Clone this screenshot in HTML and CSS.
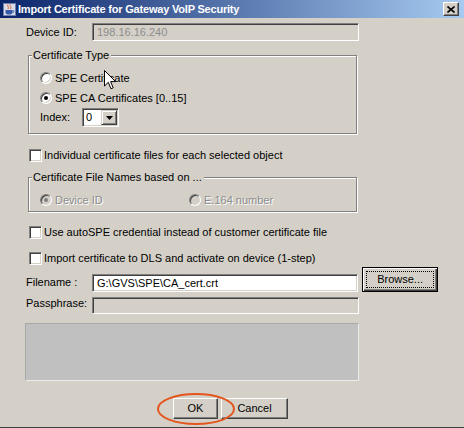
FILE: index.html
```html
<!DOCTYPE html>
<html lang="en">
<head>
  <meta charset="UTF-8">
  <title>Import Certificate for Gateway VoIP Security</title>
  <link rel="stylesheet" href="styles.css">
</head>
<body>
  <div class="dialog">
    <div class="titlebar">
      <svg class="app-icon" width="13" height="13" viewBox="0 0 13 13">
        <rect x="0.5" y="0.5" width="12" height="12" fill="#d8dce8" stroke="#7080a8"/>
        <path d="M5 1.5 C3.5 3 6.5 4 5 6 M7.5 1.5 C6 3 9 4 7.5 6" stroke="#e06020" stroke-width="1" fill="none"/>
        <path d="M2.5 7 H9.5 V9.5 C9.5 11 8 11.5 6 11.5 C4 11.5 2.5 11 2.5 9.5 Z" fill="#3858a8"/>
        <path d="M9.5 7.5 C11.5 7.5 11.5 9.5 9.5 9.5" stroke="#3858a8" fill="none"/>
      </svg>
      <span class="title">Import Certificate for Gateway VoIP Security</span>
      <span class="close-btn">
        <svg width="8" height="7" viewBox="0 0 8 7">
          <path d="M0.5 0.5 L7.5 6.5 M7.5 0.5 L0.5 6.5" stroke="#000" stroke-width="1.6"/>
        </svg>
      </span>
    </div>

    <div class="content">
      <div class="form-row device-row">
        <span class="label">Device ID:</span>
        <div class="textfield disabled">198.16.16.240</div>
      </div>

      <div class="group cert-type">
        <div class="group-title">Certificate Type</div>
        <div class="radio-row first-radio"><span class="radio"></span>SPE Certificate</div>
        <div class="radio-row"><span class="radio checked"></span>SPE CA Certificates [0..15]</div>
        <div class="index-row">
          <span class="index-label">Index:</span>
          <div class="combo">
            <span class="combo-value">0</span>
            <span class="combo-arrow">
              <svg width="7" height="4" viewBox="0 0 7 4"><path d="M0 0 H7 L3.5 4 Z" fill="#000"/></svg>
            </span>
          </div>
        </div>
      </div>

      <div class="check-row first-check"><span class="checkbox"></span>Individual certificate files for each selected object</div>

      <div class="group file-names">
        <div class="group-title">Certificate File Names based on ...</div>
        <div class="radio-line">
          <div class="radio-item device-id"><span class="radio disabled checked"></span><span class="disabled-text">Device ID</span></div>
          <div class="radio-item"><span class="radio disabled"></span><span class="disabled-text">E.164 number</span></div>
        </div>
      </div>

      <div class="check-row second-check"><span class="checkbox"></span>Use autoSPE credential instead of customer certificate file</div>
      <div class="check-row third-check"><span class="checkbox"></span>Import certificate to DLS and activate on device (1-step)</div>

      <div class="form-row file-row">
        <span class="label">Filename :</span>
        <div class="textfield">G:\GVS\SPE\CA_cert.crt</div>
        <button class="btn browse-btn"><span class="focus-ring">Browse...</span></button>
      </div>

      <div class="form-row pass-row">
        <span class="label">Passphrase:</span>
        <div class="textfield disabled"></div>
      </div>

      <div class="message-box"></div>

      <div class="button-row">
        <button class="btn ok-btn">OK</button>
        <button class="btn cancel-btn">Cancel</button>
        <svg class="ok-circle" width="80" height="34" viewBox="0 0 80 34">
          <ellipse cx="40" cy="17" rx="38" ry="15" fill="none" stroke="#e4561e" stroke-width="2"/>
        </svg>
      </div>
    </div>

    <svg class="cursor" width="13" height="20" viewBox="0 0 13 20">
      <path d="M0.5 0.5 L0.5 16 L4.3 12.3 L7 18.8 L9.2 17.8 L6.6 11.6 L11.5 11.6 Z" fill="#fff" stroke="#000" stroke-width="1"/>
    </svg>
  </div>
</body>
</html>
```

FILE: styles.css
```css
* {
  box-sizing: border-box;
}

body {
  margin: 0;
  background: #d4d0c8;
  font-family: "Liberation Sans", Arial, sans-serif;
  font-size: 11px;
  line-height: 13px;
  color: #000;
}

.dialog {
  position: relative;
  width: 464px;
  height: 428px;
  display: flex;
  flex-direction: column;
  background: #d4d0c8;
  border-bottom: 1px solid #404040;
  overflow: hidden;
}

/* title bar */
.titlebar {
  height: 18px;
  display: flex;
  align-items: center;
  padding: 0 5px 0 3px;
  background: linear-gradient(to right, #0a246a, #a6caf0);
  color: #fff;
  font-weight: bold;
}

.app-icon {
  margin-right: 2px;
  flex: none;
}

.title {
  flex: 1;
  letter-spacing: -0.2px;
}

.close-btn {
  width: 16px;
  height: 14px;
  display: flex;
  align-items: center;
  justify-content: center;
  background: #d4d0c8;
  border: 1px solid;
  border-color: #fff #404040 #404040 #fff;
  box-shadow: inset -1px -1px 0 #808080;
}

/* content */
.content {
  display: flex;
  flex-direction: column;
  padding: 5px 26px 0 26px;
}

.form-row {
  display: flex;
  align-items: center;
}

.label {
  width: 66px;
  flex: none;
}

.textfield {
  width: 267px;
  height: 18px;
  display: flex;
  align-items: center;
  padding: 0 4px;
  background: #fff;
  border: 1px solid;
  border-color: #808080 #fff #fff #808080;
  box-shadow: inset 1px 1px 0 #404040, inset -1px -1px 0 #d4d0c8;
  white-space: nowrap;
}

.textfield.disabled {
  background: #d4d0c8;
  color: #8c8c8c;
}

/* group boxes */
.group {
  margin-left: 2px;
  width: 329px;
  padding: 0 11px;
  border: 1px solid #808080;
  box-shadow: inset 1px 1px 0 #fff, 1px 1px 0 #fff;
}

.group-title {
  width: max-content;
  margin: -7px 0 0 -8px;
  padding: 0 2px 0 1px;
  line-height: 12px;
  background: #d4d0c8;
}

.cert-type {
  margin-top: 14px;
  padding-bottom: 6px;
}

.radio-row {
  height: 20px;
  display: flex;
  align-items: center;
}

.first-radio {
  margin-top: 7px;
}

.radio {
  position: relative;
  width: 12px;
  height: 12px;
  flex: none;
  margin-right: 3px;
  border-radius: 50%;
  background: #fff;
  border: 1px solid;
  border-color: #808080 #fff #fff #808080;
  box-shadow: inset 1px 1px 0 #404040, inset -1px -1px 0 #d4d0c8;
}

.radio.checked::after {
  content: "";
  position: absolute;
  left: 3px;
  top: 3px;
  width: 4px;
  height: 4px;
  border-radius: 50%;
  background: #000;
}

.radio.disabled {
  background: #d4d0c8;
}

.radio.disabled.checked::after {
  background: #808080;
}

.disabled-text {
  color: #8c8c8c;
  text-shadow: 1px 1px 0 #fff;
}

.index-row {
  height: 19px;
  display: flex;
  align-items: center;
}

.index-label {
  width: 42px;
}

.combo {
  width: 37px;
  height: 19px;
  display: flex;
  padding: 1px;
  background: #fff;
  border: 1px solid;
  border-color: #808080 #fff #fff #808080;
  box-shadow: inset 1px 1px 0 #404040, inset -1px -1px 0 #d4d0c8;
}

.combo-value {
  flex: 1;
  padding-left: 2px;
  line-height: 15px;
}

.combo-arrow {
  width: 16px;
  display: flex;
  align-items: center;
  justify-content: center;
  background: #d4d0c8;
  border: 1px solid;
  border-color: #d4d0c8 #404040 #404040 #d4d0c8;
  box-shadow: inset 1px 1px 0 #fff, inset -1px -1px 0 #808080;
}

/* checkboxes */
.check-row {
  display: flex;
  align-items: center;
  height: 13px;
  margin-left: 3px;
}

.checkbox {
  width: 13px;
  height: 13px;
  flex: none;
  margin-right: 2px;
  background: #fff;
  border: 1px solid;
  border-color: #808080 #fff #fff #808080;
  box-shadow: inset 1px 1px 0 #404040, inset -1px -1px 0 #d4d0c8;
}

.first-check {
  margin-top: 15px;
}

.file-names {
  margin-top: 15px;
  padding-bottom: 2px;
}

.radio-line {
  height: 18px;
  margin-top: 8px;
  display: flex;
  align-items: center;
}

.radio-item {
  display: flex;
  align-items: center;
}

.radio-item.device-id {
  width: 149px;
}

.second-check {
  margin-top: 14px;
}

.third-check {
  margin-top: 13px;
}

/* filename / passphrase */
.file-row {
  margin-top: 2px;
  height: 25px;
  align-items: flex-end;
}

.file-row .label {
  margin-bottom: 2px;
  line-height: 15px;
}

.btn {
  height: 21px;
  padding: 0;
  font: inherit;
  color: #000;
  background: #d4d0c8;
  border: 1px solid;
  border-color: #fff #404040 #404040 #fff;
  box-shadow: inset -1px -1px 0 #808080;
}

.browse-btn {
  width: 76px;
  height: 25px;
  margin-left: 4px;
  padding: 3px;
  display: flex;
  border-color: #000;
  box-shadow: inset 1px 1px 0 #fff, inset -1px -1px 0 #404040, inset -2px -2px 0 #808080;
}

.focus-ring {
  flex: 1;
  display: flex;
  align-items: center;
  justify-content: center;
  border: 1px dotted #000;
}

.pass-row {
  margin-top: 5px;
  align-items: flex-start;
}

.pass-row .textfield {
  height: 17px;
}

.message-box {
  margin: 9px 0 0 -1px;
  width: 334px;
  height: 58px;
  background: #c0c0c0;
  border: 1px solid;
  border-color: #a8a8a8 #ececec #ececec #a8a8a8;
}

/* buttons */
.button-row {
  position: relative;
  margin-top: 17px;
  margin-right: 3px;
  display: flex;
  justify-content: center;
  gap: 3px;
}

.ok-btn {
  width: 45px;
}

.cancel-btn {
  width: 67px;
}

.ok-circle {
  position: absolute;
  left: 130px;
  top: -6px;
}

.cursor {
  position: absolute;
  left: 104px;
  top: 70px;
}
```
